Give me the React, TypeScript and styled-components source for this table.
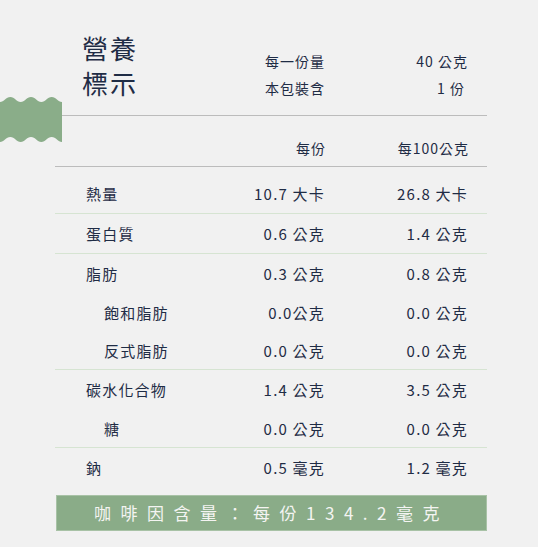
import * as React from 'react';
import styled, { createGlobalStyle } from 'styled-components';

const GlobalStyle = createGlobalStyle`
  html, body {
    margin: 0;
    padding: 0;
    background: #f1f1f1;
  }
  body {
    font-family: "Noto Sans CJK TC", "Noto Sans", sans-serif;
    color: #1f2c45;
  }
`;

interface INutrient {
  label: string;
  perServing: string;
  per100: string;
  sub?: boolean;
}

const groups: INutrient[][] = [
  [{ label: '熱量', perServing: '10.7 大卡', per100: '26.8 大卡' }],
  [{ label: '蛋白質', perServing: '0.6 公克', per100: '1.4 公克' }],
  [
    { label: '脂肪', perServing: '0.3 公克', per100: '0.8 公克' },
    { label: '飽和脂肪', perServing: '0.0公克', per100: '0.0 公克', sub: true },
    { label: '反式脂肪', perServing: '0.0 公克', per100: '0.0 公克', sub: true }
  ],
  [
    { label: '碳水化合物', perServing: '1.4 公克', per100: '3.5 公克' },
    { label: '糖', perServing: '0.0 公克', per100: '0.0 公克', sub: true }
  ],
  [{ label: '鈉', perServing: '0.5 毫克', per100: '1.2 毫克' }]
];

const Wave = () => (
  <WaveMark viewBox="0 0 62 45" width="62" height="45">
    <path
      d="M0 5 C4 5 6 0 10.33 0 C14.6 0 16.6 5 20.67 5 C24.7 5 26.7 0 31 0 C35.3 0 37.3 5 41.33 5 C45.4 5 47.4 0 51.67 0 C56 0 58 5 62 5
         L62 45 C58 45 56 40 51.67 40 C47.4 40 45.4 45 41.33 45 C37.3 45 35.3 40 31 40 C26.7 40 24.7 45 20.67 45 C16.6 45 14.6 40 10.33 40 C6 40 4 45 0 45 Z"
      fill="#8aad89"
    />
  </WaveMark>
);

export default function App() {
  return (
    <>
      <GlobalStyle />
      <Page>
        <Wave />
        <Panel>
          <Header>
            <Title>
              營養
              <br />
              標示
            </Title>
            <InfoTable>
              <InfoCell>每一份量</InfoCell>
              <InfoCell>40 公克</InfoCell>
              <InfoCell>本包裝含</InfoCell>
              <InfoCell $shift>1 份</InfoCell>
            </InfoTable>
          </Header>
          <ColumnHead>
            <span />
            <HeadCell>每份</HeadCell>
            <HeadCell>每100公克</HeadCell>
          </ColumnHead>
          <Body>
            {groups.map((group, gi) => (
              <Group key={gi} $last={gi === groups.length - 1}>
                {group.map((n) => (
                  <Row key={n.label} $sub={n.sub}>
                    <Label $sub={n.sub}>{n.label}</Label>
                    <Value>{n.perServing}</Value>
                    <Value>{n.per100}</Value>
                  </Row>
                ))}
              </Group>
            ))}
          </Body>
          <Caffeine>咖啡因含量：每份134.2毫克</Caffeine>
        </Panel>
      </Page>
    </>
  );
}

const Page = styled.div`
  position: relative;
  width: 538px;
  height: 547px;
  padding-top: 30px;
  box-sizing: border-box;
`;

const WaveMark = styled.svg`
  position: absolute;
  left: 0;
  top: 97px;
  z-index: 1;
  display: block;
`;

const Panel = styled.div`
  margin-left: 55px;
  width: 432px;
`;

const Header = styled.div`
  display: flex;
  justify-content: space-between;
  height: 85px;
  padding: 0 19px 0 27px;
  border-bottom: 1px solid #bcbcbc;
`;

const Title = styled.h1`
  margin: 0;
  font-size: 26px;
  font-weight: 400;
  line-height: 35px;
  letter-spacing: 2px;
`;

const InfoTable = styled.div`
  align-self: flex-end;
  display: grid;
  grid-template-columns: 120px 143px;
  grid-auto-rows: 27px;
  padding-bottom: 13px;
`;

const InfoCell = styled.div<{ $shift?: boolean }>`
  font-size: 14px;
  letter-spacing: 1px;
  line-height: 27px;
  text-align: right;
  padding-right: ${(p) => (p.$shift ? '3px' : '0')};
`;

const ColumnHead = styled.div`
  display: grid;
  grid-template-columns: 1fr 120px 143px;
  align-items: end;
  height: 51px;
  box-sizing: border-box;
  padding: 0 18px 8px 31px;
  border-bottom: 1px solid #bcbcbc;
  font-size: 14px;
  letter-spacing: 1px;
  line-height: 20px;
`;

const HeadCell = styled.div`
  text-align: right;
`;

const Body = styled.div`
  padding-top: 7px;
`;

const Group = styled.div<{ $last?: boolean }>`
  border-bottom: ${(p) => (p.$last ? 'none' : '1px solid #d6e4d2')};
`;

const Row = styled.div<{ $sub?: boolean }>`
  display: grid;
  grid-template-columns: 1fr 120px 143px;
  align-items: center;
  height: ${(p) => (p.$sub ? '38px' : '39px')};
  padding: 0 19px 0 31px;
  font-size: 15px;
  letter-spacing: 1.2px;
`;

const Label = styled.div<{ $sub?: boolean }>`
  padding-left: ${(p) => (p.$sub ? '18px' : '0')};
`;

const Value = styled.div`
  text-align: right;
`;

const Caffeine = styled.div`
  margin: 8px 0 0 1px;
  height: 36px;
  box-sizing: border-box;
  background: #8aac88;
  border: 1px solid #a8c2a6;
  color: #f4f4f2;
  font-size: 17px;
  letter-spacing: 9.5px;
  line-height: 34px;
  text-align: center;
`;
